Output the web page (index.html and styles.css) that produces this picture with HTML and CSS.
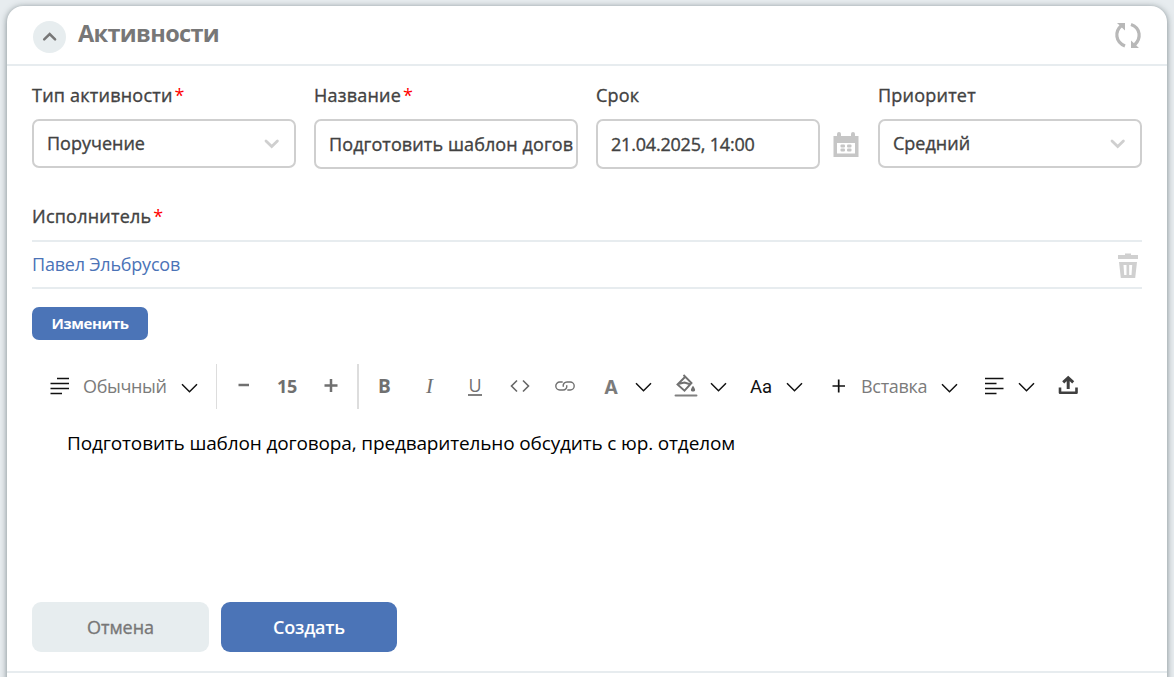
FILE: index.html
```html
<!DOCTYPE html>
<html lang="ru">
<head>
<meta charset="utf-8">
<title>Активности</title>
<link rel="stylesheet" href="styles.css">
</head>
<body>
<svg class="defs" width="0" height="0">
  <symbol id="chevron" viewBox="0 0 18 10"><path d="M1 1.200 8.500 8.700l7.500-7.500" fill="none" stroke="#111" stroke-width="1.500"/></symbol>
  <symbol id="select-arrow" viewBox="0 0 16 10"><path d="M2 2l5.700 5.500L13.400 2" fill="none" stroke="#cfcfcf" stroke-width="2.800" stroke-linecap="round"/></symbol>
</svg>
<main class="card">
  <header class="card-header">
    <button class="collapse"><svg width="15" height="10" viewBox="0 0 15 10"><path d="M2.200 7.400 7.700 2l5.400 5.400" fill="none" stroke="#777" stroke-width="2.500" stroke-linecap="round"/></svg></button>
    <h1 class="title">Активности</h1>
    <svg class="refresh" width="28" height="28" viewBox="0 0 28 28"><g fill="none" stroke="#b8b8b8" stroke-width="3.200"><path d="M11 25C1.200 21 .500 10.500 7.500 4.500"/><path d="M17 3.500C26.800 7 27.500 17.500 20.500 24"/></g><path fill="#b8b8b8" d="M3 2h8v7.500zM25 27h-8v-7.500z"/></svg>
  </header>
  <section class="form">
    <div class="fields">
      <div class="field"><label class="label">Тип активности<span class="required">*</span></label><div class="control select"><span>Поручение</span><svg width="16" height="10"><use href="#select-arrow"/></svg></div></div>
      <div class="field"><label class="label">Название<span class="required">*</span></label><div class="control input"><span class="name-value">Подготовить шаблон догов</span></div></div>
      <div class="field"><label class="label">Срок</label><div class="date-row"><div class="control input date"><span>21.04.2025, 14:00</span></div>
        <svg width="26" height="26" viewBox="0 0 26 26"><path fill="#c6c6c6" fill-rule="evenodd" d="M.500 4H4V2a2 2 0 0 1 4 0v2h10V2a2 2 0 0 1 4 0v2h3.500v21H.500zM4 11v10.500h18V11z"/><g fill="#c6c6c6"><rect x="7.500" y="12.500" width="4.500" height="3" rx="1"/><rect x="14" y="12.500" width="4.500" height="3" rx="1"/><rect x="7.500" y="16.500" width="4.500" height="3" rx="1"/><rect x="14" y="16.500" width="4.500" height="3" rx="1"/></g></svg></div></div>
      <div class="field"><label class="label">Приоритет</label><div class="control select"><span>Средний</span><svg width="16" height="10"><use href="#select-arrow"/></svg></div></div>
    </div>
    <label class="label executor-label">Исполнитель<span class="required">*</span></label>
    <div class="executor"><a class="person">Павел Эльбрусов</a>
      <svg class="trash" width="22" height="26" viewBox="0 0 22 26"><path fill="#d0d0d0" fill-rule="evenodd" d="M1 2h7V.500h6V2h7v4H1zM2 9h18l-1.800 16H3.800zM6.500 12l.7 10h2.300V12zM12.200 12v10h2.300l.7-10z"/></svg>
    </div>
    <button class="change">Изменить</button>
    <div class="toolbar">
      <svg class="t-para" width="20" height="20" viewBox="0 0 20 20"><path d="M7 2.500h12M.500 7.500H19M.500 12.500H19M.500 17.500H12" stroke="#111" stroke-width="1.700"/></svg>
      <span class="t-style">Обычный</span>
      <svg class="t-style-arrow" width="18" height="10"><use href="#chevron"/></svg>
      <i class="divider"></i>
      <svg class="t-minus" width="14" height="14" viewBox="0 0 14 14"><path d="M1.500 6h10.500" stroke="#707070" stroke-width="2.500"/></svg>
      <span class="t-size">15</span>
      <svg class="t-plus" width="14" height="14" viewBox="0 0 14 14"><path d="M.500 6.500h13M7 0v13" stroke="#707070" stroke-width="2.500"/></svg>
      <i class="divider thick"></i>
      <b class="t-bold">B</b>
      <em class="t-italic">I</em>
      <span class="t-underline">U</span>
      <svg class="t-code" width="20" height="14" viewBox="0 0 20 14"><path d="M7 1.500 1.500 7 7 12.500M13 1.500 18.500 7 13 12.500" fill="none" stroke="#666" stroke-width="1.600"/></svg>
      <svg class="t-link" width="20" height="12" viewBox="0 0 20 12"><g fill="none" stroke="#707070" stroke-width="1.400" stroke-linecap="round"><path d="M7.200 2H4.800a4 4 0 0 0 0 8H8c2.600 0 4-2 3.800-4.300"/><path d="M12.800 10h2.400a4 4 0 0 0 0-8H12C9.400 2 8 4 8.200 6.300"/></g></svg>
      <b class="t-color">A</b>
      <svg class="t-arrow" width="18" height="10"><use href="#chevron"/></svg>
      <svg class="t-fill" width="24" height="24" viewBox="0 0 24 24"><path d="M9.500 1 17.500 9 10.500 16.700 3.500 10.500 11 3M4 10 10.500 8.500l6.300 2" fill="none" stroke="#707070" stroke-width="1.900"/><path d="M19 11.800c3.500 4.700 2 5.700 0 5.700s-3.500-1 0-5.700z" fill="#707070"/><path d="M1.500 21.500h21" stroke="#808080" stroke-width="1.900" stroke-linecap="round"/></svg>
      <svg class="t-arrow" width="18" height="10"><use href="#chevron"/></svg>
      <span class="t-case">Aa</span>
      <svg class="t-arrow" width="18" height="10"><use href="#chevron"/></svg>
      <svg class="t-add" width="14" height="14" viewBox="0 0 14 14"><path d="M.500 7h12.500M6.700.500v13" stroke="#111" stroke-width="1.700"/></svg>
      <span class="t-insert">Вставка</span>
      <svg class="t-insert-arrow" width="18" height="10"><use href="#chevron"/></svg>
      <svg class="t-align" width="20" height="20" viewBox="0 0 20 20"><path d="M1 2.500h18.500M1 7.500h11.500M1 12.500h18.500M1 17.500h11.500" stroke="#111" stroke-width="1.700"/></svg>
      <svg class="t-arrow" width="18" height="10"><use href="#chevron"/></svg>
      <svg class="t-upload" width="20" height="20" viewBox="0 0 20 20"><g fill="none" stroke="#3f3f3f"><path d="M2 12.500v5.200h16.500v-5.200" stroke-width="2.600" stroke-linejoin="round"/><path d="M10.200 14V3.500M5.200 7.300l5-4.600 5 4.600" stroke-width="3"/></g></svg>
    </div>
    <div class="editor">Подготовить шаблон договора, предварительно обсудить с юр. отделом</div>
    <div class="actions"><button class="action cancel">Отмена</button><button class="action create">Создать</button></div>
  </section>
  <div class="bottom-line"></div>
</main>
</body>
</html>
```
FILE: styles.css
```css
* { box-sizing: border-box; }
body { margin: 0; height: 677px; overflow: hidden; background: #e7ecef; padding: 6px 7px 0; font-family: "Open Sans", "Noto Sans", sans-serif; color: #424242; }
.defs { display: block; height: 0; }
button { border: 0; padding: 0; font-family: inherit; }
svg { display: block; flex: none; }
.card { height: 700px; background: #fff; border-radius: 16px 16px 0 0; box-shadow: 0 1px 6px rgba(50, 65, 70, .6); }
.card-header { height: 60px; display: flex; border-bottom: 2px solid #e7ecef; padding: 15px 25px 0 26px; }
.collapse { width: 33px; height: 32px; border-radius: 50%; background: #e7edef; display: flex; align-items: center; justify-content: center; }
.title { margin: -4px auto 0 12px; font-size: 23.500px; letter-spacing: -.65px; line-height: 32px; font-weight: 700; color: #777; }
.form { padding: 0 25px; }
.fields { display: grid; grid-template-columns: repeat(4, 264px); column-gap: 18px; padding-top: 16px; }
.label { display: block; font-size: 18px; line-height: 26px; letter-spacing: .22px; -webkit-text-stroke: .35px currentColor; white-space: nowrap; }
.required { color: #f00; margin-left: 2px; -webkit-text-stroke: 0; }
.control { border: 2px solid #cfcfcf; border-radius: 7px; margin-top: 11px; height: 49px; padding-left: 13px; display: flex; align-items: center; font-size: 18px; -webkit-text-stroke: .35px currentColor; white-space: nowrap; }
.control span { margin-top: -2px; }
.control.input span { margin-top: 0; }
.input { height: 50px; padding-right: 0; }
.select { justify-content: space-between; padding-right: 14px; }
.name-value { letter-spacing: .1px; }
.date-row { display: flex; }
.date { width: 224px; margin-right: 13px; letter-spacing: -.2px; }
.date-row svg { margin-top: 24px; }
.executor-label { margin-top: 34px; }
.executor { height: 49px; margin-top: 11px; border: solid #e7ecef; border-width: 2px 0; display: flex; justify-content: space-between; align-items: center; }
.person { color: #4b73b7; font-size: 18px; letter-spacing: -.22px; margin-top: -1px; }
.trash { margin: 2px 3px 0 0; }
.change { display: block; margin-top: 18px; width: 116px; height: 33px; border-radius: 7px; color: #fff; background: #4b74b7; font-size: 15px; font-weight: 700; letter-spacing: -.4px; padding-bottom: 2px; }
.toolbar { height: 45px; margin-top: 24px; padding: 0 0 1px 18px; display: flex; align-items: center; color: #707070; white-space: nowrap; font-size: 18px; }
.toolbar > * { flex: none; }
.t-style { width: 84px; margin-left: 13px; color: #7b7b7b; letter-spacing: -.35px; }
.t-style-arrow { margin: 3px 0 0 14px; }
.divider { width: 1px; height: 45px; background: #ddd; margin: 1px 0 0 17px; }
.divider.thick { width: 2px; margin-left: 19px; }
.t-minus { margin-left: 20px; }
.t-size { margin-left: 26px; width: 21px; font-weight: 700; letter-spacing: -.3px; }
.t-plus { margin-left: 26px; }
.t-bold { width: 12px; margin-left: 19px; font-size: 19px; }
.t-italic { width: 10px; margin-left: 36px; font: italic 21px "Liberation Serif", serif; }
.t-underline { width: 14px; margin-left: 32px; text-align: center; line-height: 18px; border-bottom: 2px solid #808080; }
.t-code { margin-left: 28px; }
.t-link { margin-left: 25px; }
.t-color { width: 16px; margin: 2px 0 0 29px; font: bold 19px Inter, sans-serif; color: #7b7b7b; }
.t-arrow { margin: 2px 0 0 15px; }
.t-fill { margin: 0 0 0 21px; }
.t-fill + .t-arrow { margin-left: 12px; }
.t-case { width: 23px; margin: 2px 0 0 22px; font: 400 18.500px Roboto, sans-serif; color: #111; }
.t-case + .t-arrow { margin-left: 13px; }
.t-add { margin-left: 28px; }
.t-insert { width: 67px; margin-left: 15px; color: #7b7b7b; letter-spacing: -.3px; }
.t-insert-arrow { margin: 3px 0 0 13px; }
.t-align { margin-left: 25px; }
.t-align + .t-arrow { margin-left: 14px; }
.t-upload { margin: -2px 0 0 22px; }
.editor { height: 193px; padding: 20px 35px 0; font-size: 19px; letter-spacing: -.15px; line-height: 28px; color: #000; white-space: nowrap; }
.actions { display: flex; gap: 12px; }
.action { height: 50px; width: 177px; border-radius: 9px; font-size: 18px; }
.cancel { color: #777; background: #e7edef; -webkit-text-stroke: .35px currentColor; }
.create { width: 176px; color: #fff; background: #4b74b7; font-weight: 600; letter-spacing: -.2px; }
.bottom-line { height: 2px; background: #e7ecef; margin-top: 19px; }
```
